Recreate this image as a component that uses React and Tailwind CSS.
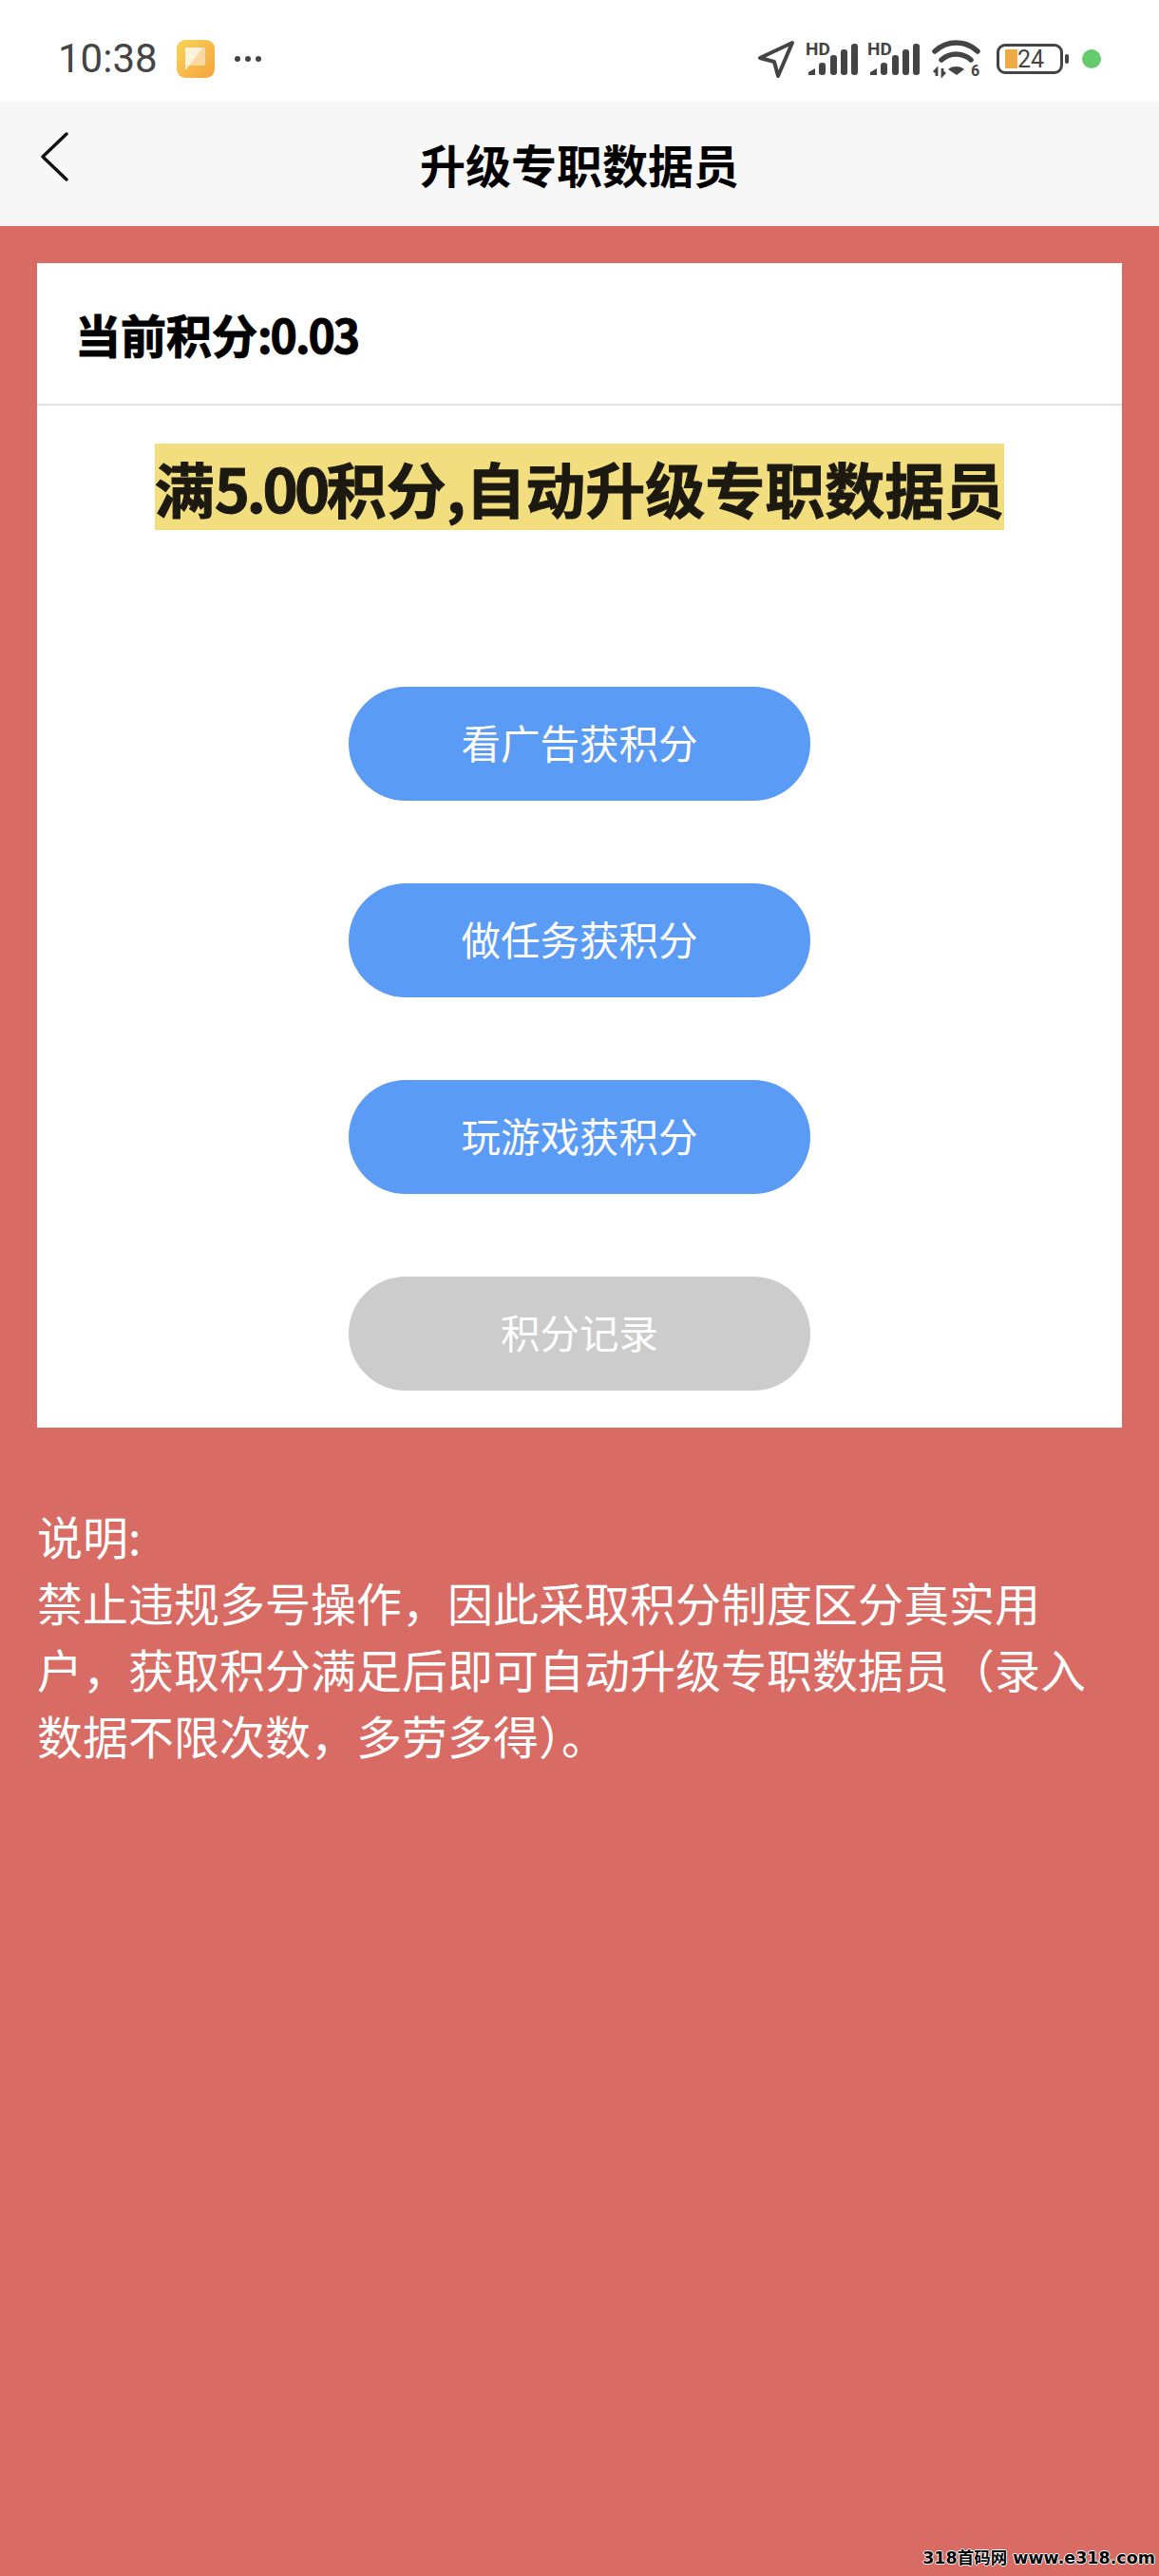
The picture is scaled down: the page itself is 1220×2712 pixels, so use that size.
import React from 'react';

const CJK = 'font-["Noto_Sans_CJK_SC","Noto_Sans",sans-serif]';

const SignalIcon = () => (
  <svg width="55" height="44" viewBox="0 -4 55 44">
    <text x="0" y="14" fontSize="19" fontWeight="700" fontFamily="Roboto, sans-serif" fill="#444444">HD</text>
    <path d="M3 35v-3l7-4v7z" fill="#444444" />
    <rect x="14" y="22" width="7" height="13" rx="3" fill="#444444" />
    <rect x="26" y="14" width="7" height="21" rx="3" fill="#444444" />
    <rect x="37" y="8" width="7" height="27" rx="3" fill="#444444" />
    <rect x="48" y="2" width="7" height="33" rx="3" fill="#444444" />
  </svg>
);

const StatusIcons = () => (
  <div className="flex items-center">
    <svg width="40" height="40" viewBox="0 0 40 40" fill="none" className="mr-[11px]">
      <path d="M37 3 3 19l15 4 4 15z" stroke="#444444" strokeWidth="4" strokeLinejoin="round" />
    </svg>
    <SignalIcon />
    <div className="w-[10px]" />
    <SignalIcon />
    <svg width="52" height="44" viewBox="0 -2 52 44" fill="none" className="ml-[13px]">
      <path d="M3 12c13-12 32-12 45 0" stroke="#444444" strokeWidth="5.5" strokeLinecap="round" />
      <path d="M10 21c9-8 22-8 31 0" stroke="#444444" strokeWidth="5.5" strokeLinecap="round" />
      <path d="M17 31c4-4 13-4 17 0l-8 6z" fill="#444444" />
      <path d="M5 38v-7l-3 3M11 30v7l3-3" stroke="#444444" strokeWidth="2.8" />
      <text x="41" y="38" fontSize="16" fontWeight="700" fontFamily="Roboto, sans-serif" fill="#444444">6</text>
    </svg>
    <div className="relative ml-[16px] flex h-[32px] w-[70px] items-center rounded-[9px] border-[3px] border-[#444444] pl-[6px]">
      <div className="h-[20px] w-[13px] bg-[#eeaa44]" />
      <span className="font-['Roboto',sans-serif] text-[25px] leading-none text-[#444444]">24</span>
    </div>
    <div className="ml-[2px] h-[10px] w-[4px] rounded-full bg-[#444444]" />
    <div className="ml-[14px] h-[20px] w-[20px] rounded-full bg-[#65cc6d]" />
  </div>
);

const ActionButton = ({ label, gray }) => (
  <button className={`flex h-[120px] w-[486px] items-center justify-center rounded-full pb-[3px] text-[41.5px] text-white ${gray ? 'bg-[#cccccc]' : 'bg-[#5a9bf6]'}`}>
    {label}
  </button>
);

const App = () => {
  return (
    <div className={`relative flex h-[2712px] w-[1220px] flex-col overflow-hidden bg-[#d86b64] ${CJK}`}>
      <div className="flex h-[106px] items-center justify-between bg-white pl-[61px] pr-[61px] pt-[18px]">
        <div className="flex items-center">
          <span className="font-['Roboto',sans-serif] text-[42px] leading-none text-[#444444]">10:38</span>
          <svg width="40" height="40" viewBox="0 0 40 40" className="ml-[20px]">
            <defs>
              <linearGradient id="note" x1="0" y1="0" x2="1" y2="1">
                <stop offset="0" stopColor="#f9d45c" />
                <stop offset="1" stopColor="#f5a33a" />
              </linearGradient>
            </defs>
            <rect width="40" height="40" rx="9" fill="url(#note)" />
            <path d="M28 8h2v19H12z" fill="#fbd9a0" />
            <path d="M9 8h19L9 32z" fill="#fdf3dc" />
          </svg>
          <div className="ml-[21px] flex gap-[5px]">
            <div className="h-[6px] w-[6px] rounded-full bg-[#444444]" />
            <div className="h-[6px] w-[6px] rounded-full bg-[#444444]" />
            <div className="h-[6px] w-[6px] rounded-full bg-[#444444]" />
          </div>
        </div>
        <StatusIcons />
      </div>

      <div className="grid h-[132px] grid-cols-[1fr_auto_1fr] items-center bg-[#f7f7f7] pl-[42px]">
        <svg width="30" height="52" viewBox="0 0 30 52" fill="none" className="mb-[14px]">
          <path d="M28 2 3 26l25 24" stroke="#111111" strokeWidth="3.4" strokeLinecap="round" strokeLinejoin="round" />
        </svg>
        <h1 className="-ml-[42px] text-[48px] font-bold text-black">升级专职数据员</h1>
        <div />
      </div>

      <div className="mx-[39px] mt-[39px] flex flex-col items-center bg-white pb-[39px]">
        <div className="flex h-[150px] w-full items-center border-b-2 border-[#e2e2e2] pl-[40px] text-[48px] font-bold text-black [-webkit-text-stroke:1px_black]">
          <span>当前积分<span className="tracking-[-2px]">:0.03</span></span>
        </div>
        <div className="mt-[40px] bg-[#f3de7f] text-[63px] leading-[91px] font-bold text-[#1c1a10] [-webkit-text-stroke:1px_#1c1a10]">
          满<span className="tracking-[-3.5px]">5.00</span>积分,自动升级专职数据员
        </div>
        <div className="mt-[165px] flex flex-col gap-[87px]">
          <ActionButton label="看广告获积分" />
          <ActionButton label="做任务获积分" />
          <ActionButton label="玩游戏获积分" />
          <ActionButton label="积分记录" gray />
        </div>
      </div>

      <div className="mx-[39px] mt-[78px] text-[48px] leading-[70px] text-white">
        <p>说明:</p>
        <p>禁止违规多号操作，因此采取积分制度区分真实用户，获取积分满足后即可自动升级专职数据员（录入数据不限次数，多劳多得）。</p>
      </div>

      <div className="absolute bottom-[8px] right-[4px] font-['DejaVu_Sans','Noto_Sans_CJK_SC',sans-serif] text-[17.5px] leading-[22px] font-bold whitespace-nowrap text-black [text-shadow:1px_0_0_#fff,-1px_0_0_#fff,0_1px_0_#fff,0_-1px_0_#fff]">
        318首码网 www.e318.com
      </div>
    </div>
  );
};

export default App;
